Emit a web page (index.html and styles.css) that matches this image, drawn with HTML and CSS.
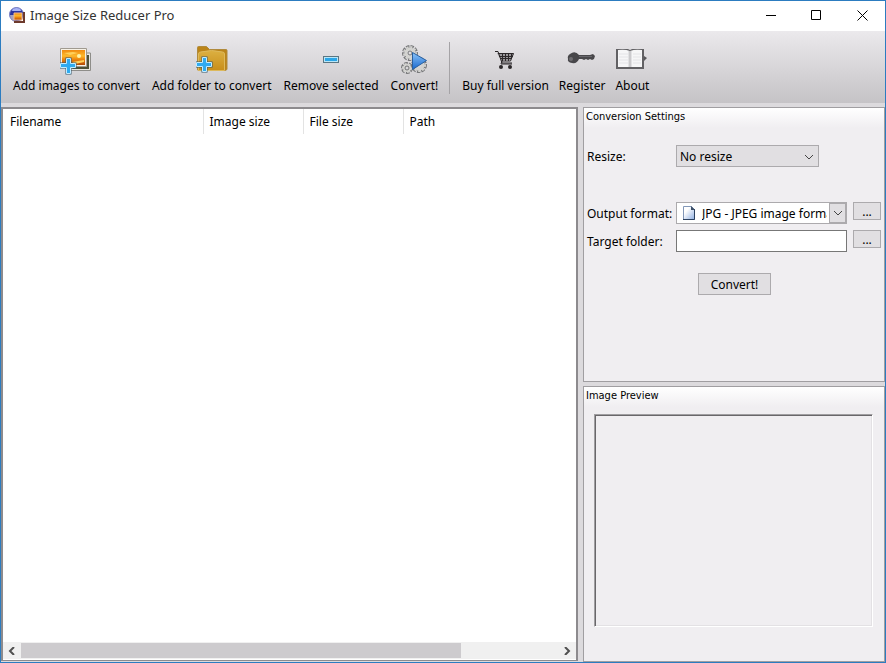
FILE: index.html
```html
<!DOCTYPE html>
<html lang="en">
<head>
  <meta charset="UTF-8" />
  <meta name="viewport" content="width=device-width, initial-scale=1.0"/>
  <title>Image Size Reducer Pro</title>
  <link rel="stylesheet" href="styles.css">
</head>
<body>

<div class="window">
  <header class="titlebar">
    <svg class="app-icon" width="17" height="16" viewBox="0 0 17 16">
      <defs>
        <linearGradient id="sunset" x1="0" y1="0" x2="0" y2="1">
          <stop offset="0" stop-color="#f08a10"/>
          <stop offset=".4" stop-color="#fdb92c"/>
          <stop offset=".6" stop-color="#f08a10"/>
          <stop offset="1" stop-color="#b04806"/>
        </linearGradient>
      </defs>
      <circle cx="7.500" cy="7.500" r="7" fill="#2c359f" stroke="#7a82c4"/>
      <path d="M3 4a4.500 3 0 0 1 9 0z" fill="#a9b4f6"/>
      <path d="M1 8h4v6a7 7 0 0 1-4-6z" fill="#a8a2bc"/>
      <path d="M5 6h8v7H5z" fill="url(#sunset)" stroke="#f3b98a"/>
      <path d="M14 5v9H5v2h11V5z" fill="#6d3a2c"/>
    </svg>
    <h1>Image Size Reducer Pro</h1>
    <div class="window-buttons">
      <button type="button" aria-label="Minimize"><svg width="11" height="11"><path d="M1 5.500h10"/></svg></button>
      <button type="button" aria-label="Maximize"><svg width="11" height="11"><path d="M.5.5h9v9h-9z"/></svg></button>
      <button type="button" aria-label="Close"><svg width="11" height="11"><path d="M.5.5l10 10M10.500.5l-10 10"/></svg></button>
    </div>
  </header>

  <nav class="toolbar">
    <div class="tool-group">
      <button type="button" class="tool">
        <svg width="32" height="32" viewBox="0 0 32 32">
          <path d="M22 8h8.500v17.500H10" fill="#e9e7e3" stroke="#8e8d89"/>
          <path d="M22 10h7v14H12z" fill="#4c5038"/>
          <path d="M.5 3.500h26v18H.5z" fill="#f6f1e6" stroke="#a09a90"/>
          <path d="M2 5h23v15H2z" fill="url(#sunset)"/>
          <path d="M4 8l9-1 5 1-8 2zM12 17l12-2v2l-9 2z" fill="#ffd05a"/>
          <circle cx="19" cy="11" r="2" fill="#fff4a8"/>
          <path d="M6.500 13.500h4v5h5v4h-5v6h-4v-6h-6v-4h6z" fill="none" stroke="#37576b" stroke-width="2"/>
          <path d="M6.500 13.500h4v5h5v4h-5v6h-4v-6h-6v-4h6z" fill="#2faaf0" stroke="#c4ecff"/>
        </svg>
        <span>Add images to convert</span>
      </button>
      <button type="button" class="tool">
        <svg width="32" height="32" viewBox="0 0 32 32">
          <defs>
            <linearGradient id="folder" x1="0" y1="0" x2="0" y2="1">
              <stop offset="0" stop-color="#dcb041"/>
              <stop offset="1" stop-color="#c88e1a"/>
            </linearGradient>
          </defs>
          <path d="M1.500 25V2.500q0-1 1-1h8l3 3h16.500q1 0 1 1v19l-2 1z" fill="#bb8418" stroke="#b08a3c"/>
          <path d="M2.500 25.500V9q0-2 2-2 11-3 22 0 2 0 2 2v16.500z" fill="url(#folder)" stroke="#ddb95c"/>
          <path d="M6.500 12.500h4v5h5v4h-5v5h-4v-5h-6v-4h6z" fill="none" stroke="#37576b" stroke-width="2"/>
          <path d="M6.500 12.500h4v5h5v4h-5v5h-4v-5h-6v-4h6z" fill="#2faaf0" stroke="#c4ecff"/>
        </svg>
        <span>Add folder to convert</span>
      </button>
      <button type="button" class="tool">
        <svg width="32" height="32" viewBox="0 0 32 32">
          <rect x="8.500" y="11.500" width="15" height="6" fill="#b9e6f7" stroke="#5b7682"/>
          <rect x="10" y="13" width="12" height="3" fill="#2ba6e8"/>
        </svg>
        <span>Remove selected</span>
      </button>
      <button type="button" class="tool">
        <svg width="32" height="32" viewBox="0 0 32 32">
          <defs>
            <linearGradient id="play" x1="0" y1="0" x2="0" y2="1">
              <stop offset="0" stop-color="#8cc5fa"/>
              <stop offset="1" stop-color="#1767cd"/>
            </linearGradient>
          </defs>
          <g fill="none" stroke="#77787a">
            <circle cx="12" cy="8" r="6" stroke-width="4" stroke-dasharray="3 1"/>
            <circle cx="9" cy="23" r="4" stroke-width="4" stroke-dasharray="3 1"/>
            <circle cx="21" cy="20" r="6" stroke-width="4" stroke-dasharray="3 1"/>
          </g>
          <g fill="none" stroke="#d3d3d0">
            <circle cx="12" cy="8" r="6" stroke-width="2" stroke-dasharray="2 2"/>
            <circle cx="9" cy="23" r="4" stroke-width="2" stroke-dasharray="2 2"/>
            <circle cx="21" cy="20" r="6" stroke-width="2" stroke-dasharray="2 2"/>
            <circle cx="12" cy="8" r="4" stroke-width="3"/>
            <circle cx="9" cy="23" r="3" stroke-width="2"/>
            <circle cx="21" cy="20" r="4" stroke-width="3"/>
          </g>
          <g fill="none" stroke="#77787a">
            <circle cx="12" cy="8" r="2"/>
            <circle cx="9" cy="23" r="2"/>
          </g>
          <path d="M14.500 7.500v17l14-9z" fill="url(#play)" stroke="#285f9f"/>
        </svg>
        <span>Convert!</span>
      </button>
    </div>
    <div class="separator"></div>
    <div class="tool-group help">
      <button type="button" class="tool">
        <svg width="32" height="32" viewBox="0 0 32 32">
          <path d="M7 8h17l-3 7H11z" fill="#9a989b"/>
          <path d="M5 6.500h3l4 11.500h10" fill="none" stroke="#2b2729"/>
          <path d="M8 8.500h15.500l-3 7.500H11M9 11.500h14M10 13.500h12M12.500 8v8M15.500 8v8M18.500 8v8M21.500 8v6M12 16l-1 3h11" fill="none" stroke="#2b2729"/>
          <circle cx="11" cy="22" r="2" fill="#2b2729"/>
          <circle cx="20" cy="22" r="2" fill="#2b2729"/>
        </svg>
        <span>Buy full version</span>
      </button>
      <button type="button" class="tool">
        <svg width="32" height="32" viewBox="0 0 32 32">
          <path d="M2 14q-1-3 2-5 5-4 9 1h11l3-1 2 2-1 3-2 1-2-1-2 1-2-1-2 1-2-1h-3q-2 5-7 4-5-1-4-4z" fill="#48474a"/>
          <path d="M13 11.500h13" stroke="#66656a"/>
          <circle cx="5" cy="14" r="2" fill="#6f6d71"/>
        </svg>
        <span>Register</span>
      </button>
      <button type="button" class="tool">
        <svg width="32" height="32" viewBox="0 0 32 32">
          <path d="M0 4h12l2 1 2-1h12v20H0z" fill="#626164"/>
          <path d="M2 5q7-1 12 1 5-2 12-1v17H2z" fill="#f6f6f7"/>
          <path d="M12 6h4v16h-4z" fill="#e2e2e4"/>
          <path d="M14 6v16" stroke="#b5b4b7"/>
          <path d="M3 9h9M3 12h9M3 15h9M3 18h9M17 9h8M17 12h8M17 15h8M17 18h8" stroke="#e4e4e7"/>
          <path d="M28 11l3 2-3 3z" fill="#58575a"/>
        </svg>
        <span>About</span>
      </button>
    </div>
  </nav>

  <main class="content">
    <section class="file-list">
      <table>
        <thead>
          <tr>
            <th class="col-name">Filename</th>
            <th class="col-size">Image size</th>
            <th class="col-size">File size</th>
            <th>Path</th>
          </tr>
        </thead>
        <tbody></tbody>
      </table>
      <div class="scrollbar">
        <button type="button" aria-label="Scroll left"><svg width="8" height="8"><path d="M6 0L2 4l4 4"/></svg></button>
        <div class="track"><div class="thumb"></div></div>
        <button type="button" aria-label="Scroll right"><svg width="8" height="8"><path d="M2 0l4 4-4 4"/></svg></button>
      </div>
    </section>

    <aside class="side">
      <section class="panel settings">
        <h2>Conversion Settings</h2>
        <form class="settings-form">
          <label for="resize">Resize:</label>
          <div class="select-box resize-box">
            <select id="resize"><option>No resize</option></select>
            <svg class="chevron" width="10" height="6"><path d="M1 1l4 4 4-4"/></svg>
          </div>

          <label for="format" class="format-row">Output format:</label>
          <div class="select-box format-box format-row">
            <svg class="file-icon" width="14" height="16" viewBox="0 0 14 16">
              <defs>
                <linearGradient id="page" x1="0" y1="0" x2="1" y2="1">
                  <stop offset=".3" stop-color="#ffffff"/>
                  <stop offset="1" stop-color="#8fafe2"/>
                </linearGradient>
              </defs>
              <path d="M1.500 1.500h8l3 3v10h-11z" fill="url(#page)" stroke="#8297b8"/>
              <path d="M12.500 4v10.500H1" fill="none" stroke="#2b4160"/>
              <path d="M9 1v4h4z" fill="#3d5068"/>
            </svg>
            <select id="format"><option>JPG - JPEG image format</option></select>
            <span class="arrow"><svg width="10" height="6"><path d="M1 1l4 4 4-4"/></svg></span>
          </div>
          <button type="button" class="btn more format-row" aria-label="Format options">...</button>

          <label for="target">Target folder:</label>
          <input type="text" id="target">
          <button type="button" class="btn more" aria-label="Browse">...</button>

          <button type="button" class="btn convert">Convert!</button>
        </form>
      </section>

      <section class="panel preview">
        <h2>Image Preview</h2>
        <div class="preview-frame"></div>
      </section>
    </aside>
  </main>
</div>

</body>
</html>
```

FILE: styles.css
```css
:root {
  --face: #f0eef1;
  --button: #e1dfe2;
  --line: #acaaad;
  --border: #2c7cc0;
}

* {
  box-sizing: border-box;
}

body {
  margin: 0;
  font-family: "Noto Sans", "Open Sans", sans-serif;
  font-size: 12px;
  line-height: 16px;
  color: #000;
}

button, input, select {
  font: inherit;
  color: inherit;
  border-radius: 0;
  margin: 0;
}

h1, h2 {
  margin: 0;
  font-weight: normal;
}

.window {
  display: flex;
  flex-direction: column;
  height: 100vh;
  border: 1px solid var(--border);
  background-color: #dcdadd;
}

/* title bar */
.titlebar {
  display: flex;
  align-items: center;
  height: 30px;
  padding: 0 0 2px 8px;
  background-color: #fff;
}

.titlebar h1 {
  flex: 1;
  margin-left: 4px;
  font-size: 13px;
  color: #333;
}

.window-buttons {
  display: flex;
}

.window-buttons button {
  display: flex;
  align-items: center;
  justify-content: center;
  width: 46px;
  height: 28px;
  padding: 0;
  border: none;
  background: none;
}

.window-buttons path {
  fill: none;
  stroke: #000;
}

/* toolbar */
.toolbar {
  display: flex;
  height: 72px;
  padding: 11px 6px 0;
  background: linear-gradient(#ebe9ec, #c5c3c6);
}

.tool-group {
  display: flex;
}

.tool {
  display: flex;
  flex-direction: column;
  align-items: center;
  padding: 3px 6px 0;
  border: none;
  background: none;
  white-space: nowrap;
}

.tool span {
  margin-top: 1px;
}

.help .tool {
  padding: 3px 5px 0;
}

.separator {
  width: 1px;
  height: 52px;
  margin: 0 7px 0 5px;
  background-color: #a5a3a6;
}

/* main area */
.content {
  display: flex;
  flex: 1;
  gap: 5px;
  min-height: 0;
  padding-top: 4px;
}

.file-list {
  display: flex;
  flex: 1;
  flex-direction: column;
  justify-content: space-between;
  min-width: 0;
  margin-bottom: 1px;
  border: 2px solid #8d8b8e;
  border-width: 2px 2px 1px;
  background-color: #fff;
}

table {
  width: 100%;
  border-collapse: collapse;
  table-layout: fixed;
}

th {
  height: 25px;
  padding: 0 6px;
  border-right: 1px solid #e3e3e3;
  font-weight: normal;
  text-align: left;
}

th:last-child {
  border-right: none;
}

.col-name {
  width: 200px;
  padding-left: 7px;
}

.col-size {
  width: 100px;
}

.scrollbar {
  display: flex;
  height: 17px;
  margin-bottom: 1px;
  background-color: #f0f0f0;
}

.scrollbar button {
  display: flex;
  align-items: center;
  justify-content: center;
  width: 18px;
  padding: 0;
  border: none;
  background: none;
}

.scrollbar path {
  fill: none;
  stroke: #505050;
  stroke-width: 2;
}

.track {
  flex: 1;
  padding: 1px 0;
}

.thumb {
  width: 82%;
  height: 15px;
  background-color: #cdcbce;
}

/* right side */
.side {
  display: flex;
  flex-direction: column;
  gap: 4px;
  width: 302px;
}

.panel {
  border: 1px solid #a09ea1;
  background: linear-gradient(#fff, var(--face) 20px);
}

.panel h2 {
  padding: 1px 2px 0;
  font-family: "DejaVu Sans Condensed", "DejaVu Sans", sans-serif;
  font-size: 11px;
}

.settings {
  height: 275px;
}

.settings-form {
  display: grid;
  grid-template-columns: 83px 171px 28px;
  column-gap: 6px;
  row-gap: 6px;
  align-items: center;
  padding: 20px 3px 0;
  white-space: nowrap;
}

.settings-form label {
  padding-top: 2px;
}

.format-row {
  margin-top: 29px;
}

.select-box {
  display: flex;
  position: relative;
  height: 22px;
  border: 1px solid var(--line);
}

.select-box select {
  width: 100%;
  padding: 1px 24px 0 3px;
  border: none;
  background: none;
  appearance: none;
}

.resize-box {
  grid-column: 2 / 4;
  width: 143px;
  background-color: var(--button);
}

.chevron path, .arrow path {
  fill: none;
  stroke: #454545;
}

.chevron {
  position: absolute;
  top: 8px;
  right: 4px;
  pointer-events: none;
}

.format-box {
  background-color: #fff;
}

.format-box select {
  padding: 1px 19px 0 25px;
}

.file-icon {
  position: absolute;
  top: 2px;
  left: 5px;
  pointer-events: none;
}

.arrow {
  display: flex;
  position: absolute;
  top: 0;
  right: 0;
  bottom: 0;
  align-items: center;
  justify-content: center;
  width: 17px;
  border: 1px solid var(--line);
  background-color: var(--button);
  pointer-events: none;
}

input {
  width: 100%;
  height: 22px;
  padding: 0 3px;
  border: 1px solid #777;
  background-color: #fff;
}

.btn {
  padding: 1px 0 0;
  border: 1px solid var(--line);
  background-color: var(--button);
}

.more {
  align-self: start;
  height: 18px;
}

.convert {
  grid-column: 2 / 4;
  width: 73px;
  height: 22px;
  margin: 15px 0 0 22px;
}

.preview {
  display: flex;
  flex: 1;
  flex-direction: column;
}

.preview-frame {
  flex: 1;
  margin: 10px 11px 34px 10px;
  border: 1px solid #a09ea1;
  border-right-color: #fff;
  border-bottom-color: #fff;
  box-shadow: inset 1px 1px #69676a, inset -1px -1px #e3e1e4;
}
```
